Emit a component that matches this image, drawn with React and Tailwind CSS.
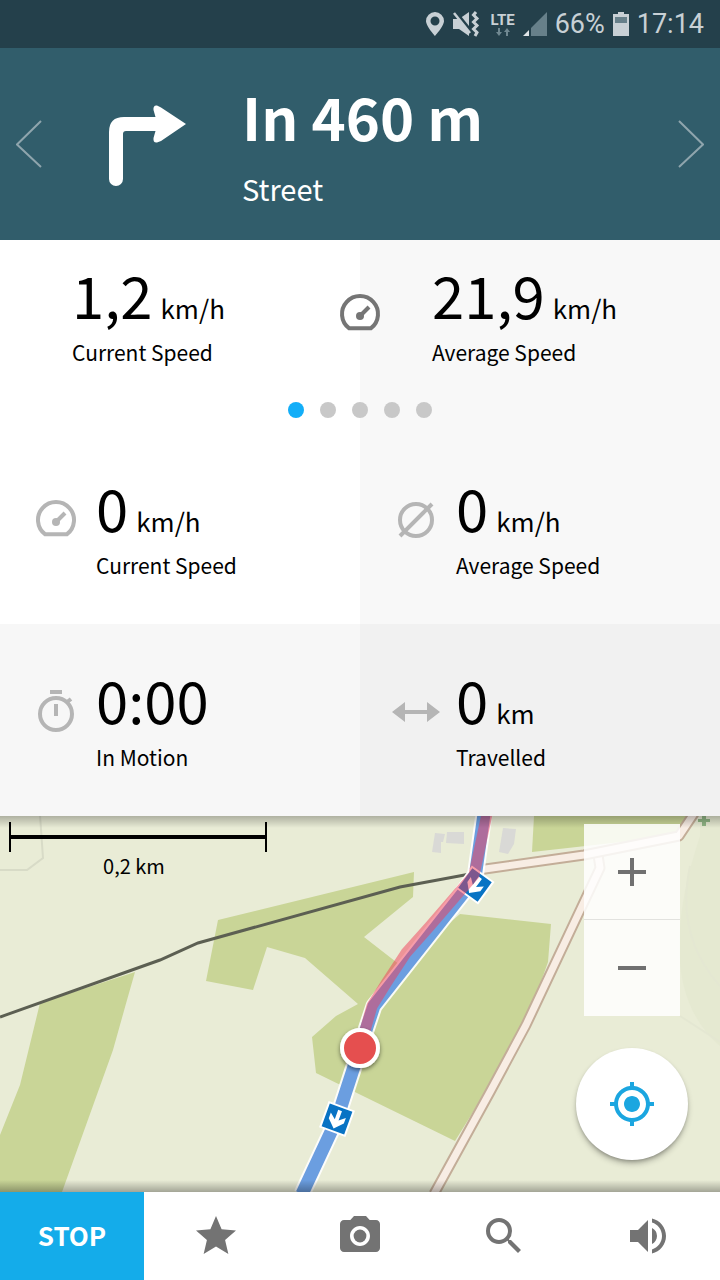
import React from 'react';
import {
  MdStar,
  MdPhotoCamera,
  MdSearch,
  MdVolumeUp,
  MdMyLocation
} from 'react-icons/md';

const GaugeIcon = ({ className, fill = 'none' }) => (
  <svg viewBox="0 0 48 48" className={className} fill="none">
    <path
      d="M13 38.200A18 18 0 1 1 35 38.200Z"
      fill={fill}
      stroke="currentColor"
      strokeWidth="4"
    />
    <path d="M24 26 33 17" stroke="currentColor" strokeWidth="4" />
    <circle cx="24" cy="26" r="4" fill="currentColor" />
  </svg>
);

const AverageIcon = ({ className }) => (
  <svg viewBox="0 0 48 48" className={className} fill="none" stroke="currentColor" strokeWidth="4">
    <circle cx="24" cy="24" r="16" />
    <path d="M8 40 40 8" />
  </svg>
);

const StopwatchIcon = ({ className }) => (
  <svg viewBox="0 0 48 48" className={className} fill="none" stroke="currentColor" strokeWidth="4">
    <circle cx="24" cy="26" r="16" />
    <path d="M18 4H30M24 16V28M34.500 14.500 39 11" />
  </svg>
);

const DistanceIcon = ({ className }) => (
  <svg viewBox="0 0 48 48" className={className} fill="currentColor">
    <path d="M0 24 13 14V22H35V14L48 24 35 34V26H13V34Z" />
  </svg>
);

const PinIcon = () => (
  <svg viewBox="0 0 18 24" className="h-6 w-4.5" fill="#c8d0d5" fillRule="evenodd">
    <path d="M9 0A9 9 0 0 1 18 9C18 14 9 24 9 24S0 14 0 9A9 9 0 0 1 9 0ZM9 4.500A4.500 4.500 0 1 0 9 13.500 4.500 4.500 0 0 0 9 4.500Z" />
  </svg>
);

const VibrateIcon = () => (
  <svg viewBox="0 0 28 28" className="h-7 w-7" fill="none">
    <path d="M1 9H7L17 2V26L7 19H1Z" fill="#c8d0d5" />
    <path d="M3 1 19 21" stroke="#24404b" strokeWidth="3" />
    <path d="M2 3 18 23" stroke="#c8d0d5" strokeWidth="2.500" />
    <path
      d="M24 2 21.500 5 25 8.500 21.500 12 25 15.500 21.500 19 25 22.500 23 26"
      stroke="#c8d0d5"
      strokeWidth="3"
    />
  </svg>
);

const stats = [
  { icon: GaugeIcon, value: '0', unit: 'km/h', label: 'Current Speed', bg: 'bg-white' },
  { icon: AverageIcon, value: '0', unit: 'km/h', label: 'Average Speed', bg: 'bg-[#f8f8f8]' },
  { icon: StopwatchIcon, value: '0:00', unit: '', label: 'In Motion', bg: 'bg-[#f7f7f7]' },
  { icon: DistanceIcon, value: '0', unit: 'km', label: 'Travelled', bg: 'bg-[#f1f1f1]' }
];

const actions = [
  { icon: MdStar, label: 'Favourites' },
  { icon: MdPhotoCamera, label: 'Camera' },
  { icon: MdSearch, label: 'Search' },
  { icon: MdVolumeUp, label: 'Sound' }
];

const Reading = ({ value, unit, label }) => (
  <div>
    <div className="flex items-baseline gap-2 text-[58px] leading-16">
      <span>{value}</span>
      {unit && <span className="text-[26px] leading-8">{unit}</span>}
    </div>
    <div className="mt-3 text-[21px] leading-7">{label}</div>
  </div>
);

const StatusBar = () => (
  <div className="flex h-12 items-center justify-end bg-[#24404b] pr-4 font-[Roboto,sans-serif] text-[27px] text-[#c8d0d5]">
    <PinIcon />
    <span className="ml-2">
      <VibrateIcon />
    </span>
    <div className="ml-2.5 flex flex-col items-center">
      <span className="text-[15px] leading-4 font-bold">LTE</span>
      <svg viewBox="0 0 14 8" className="h-2 w-3.5" fill="#708891">
        <path d="M2 0H4V4H6L3 8 0 4H2ZM10 8H12V4H14L11 0 8 4H10Z" />
      </svg>
    </div>
    <svg viewBox="0 0 24 24" className="ml-2 h-6 w-6">
      <path d="M8 24V16L24 0V24Z" fill="#67808a" />
      <path d="M0 24 6 18V24Z" fill="#dfe4e7" />
    </svg>
    <span className="ml-2">66%</span>
    <svg viewBox="0 0 16 24" className="ml-2 h-6 w-4">
      <path d="M5 0H11V2H16V24H0V2H5Z" fill="#c8d0d5" />
      <path d="M2 5H14V11H2Z" fill="#67808a" />
    </svg>
    <span className="ml-2">17:14</span>
  </div>
);

const TurnBanner = () => (
  <header className="flex h-48 items-center bg-[#315d6b] px-4 text-white">
    <button aria-label="Previous instruction">
      <svg viewBox="0 0 26 48" className="h-12 w-6.5" fill="none" stroke="#8fa5ad" strokeWidth="2">
        <path d="M25 1 1 24.500 25 47" />
      </svg>
    </button>
    <svg viewBox="0 0 80 84" className="ml-16 h-21 w-20" fill="#fff">
      <path d="M3 77V30Q3 15 18 15H49.500L47.500 8Q47 3 51 3.500L55 5.500 80 22 55 39 51 40.500Q47 41 47.500 36L49.500 29H20Q17 29 17 32V77A7 7 0 0 1 3 77Z" />
    </svg>
    <div className="ml-14 flex-1 pb-1">
      <h1 className="text-[58px] leading-20 font-bold">In 460 m</h1>
      <p className="mt-3 text-[29px] leading-10">Street</p>
    </div>
    <button aria-label="Next instruction">
      <svg viewBox="0 0 26 48" className="h-12 w-6.5" fill="none" stroke="#8fa5ad" strokeWidth="2">
        <path d="M1 1 25 24.500 1 47" />
      </svg>
    </button>
  </header>
);

const SpeedPager = () => (
  <section className="relative grid h-48 grid-cols-2">
    <div className="bg-white pt-[22px] pl-18">
      <Reading value="1,2" unit="km/h" label="Current Speed" />
    </div>
    <div className="bg-[#f8f8f8] pt-[22px] pl-18">
      <Reading value="21,9" unit="km/h" label="Average Speed" />
    </div>
    <div className="absolute inset-x-0 top-[50px] flex flex-col items-center text-[#757575]">
      <GaugeIcon className="h-12 w-12" fill="#fff" />
      <div className="mt-16 flex gap-4">
        {[0, 1, 2, 3, 4].map((page) => (
          <button
            key={page}
            aria-label={`Page ${page + 1}`}
            className={`h-4 w-4 rounded-full ${page === 0 ? 'bg-[#13aef8]' : 'bg-[#c8c8c8]'}`}
          />
        ))}
      </div>
    </div>
  </section>
);

const RouteSign = ({ x, y, angle }) => (
  <g transform={`translate(${x} ${y}) rotate(${angle})`}>
    <rect x="-13" y="-13" width="26" height="26" fill="#0873c4" stroke="#fff" strokeWidth="2" />
    <path d="M-2-9H2V1L8-4V2L0 10-8 2V-4L-2 1Z" fill="#fff" />
  </g>
);

const Road = ({ d }) => (
  <g fill="none" strokeLinejoin="round">
    <path d={d} stroke="#c3ad98" strokeWidth="11" />
    <path d={d} stroke="#f8ede4" strokeWidth="7" />
  </g>
);

const MapCanvas = () => (
  <svg
    viewBox="0 0 720 376"
    preserveAspectRatio="xMidYMid slice"
    className="absolute inset-0 h-full w-full"
  >
    <defs>
      <filter id="pin" x="-50%" y="-50%" width="200%" height="200%">
        <feDropShadow dx="0" dy="2" stdDeviation="2" floodOpacity="0.5" />
      </filter>
    </defs>
    <rect width="720" height="376" fill="#e9ecd6" />
    <path d="M700 0H720V230Q650 170 700 20Z" fill="#e5e9d1" />
    <path d="M690 50Q675 120 720 170M680 200 720 226" fill="none" stroke="#e4e7d2" strokeWidth="2" />
    <path d="M40 0 43 43 27 55H0" fill="none" stroke="#d8dbc7" strokeWidth="2" transform="translate(0 -1)" />

    {/* Fields and woods */}
    <g fill="#c9d597">
      <path d="M40 187 135 156 127 184 113 234 62 376H0V319L20 269Z" />
      <path d="M218 104 414 56 413 81 364 121 400 149 460 98 551 108 548 146 524 214 455 325 316 257 312 221 336 200 358 188 305 142 267 131 253 174 206 165Z" />
      <path d="M534 0H693L684 19 532 36Z" />
    </g>
    <path d="M702-1H706V3H710V6H706V10H702V6H698V3H702Z" fill="#8fb584" />

    {/* Buildings */}
    <g fill="#d9d9d6">
      <path d="M435 17 445 18 443 26H441V37L432 36Z" />
      <path d="M447 16H464V28L446 27Z" />
      <path d="M503 12 516 13 514 28 508 38 499 36Z" />
    </g>

    <Road d="M434 378 490 276 526 209 600 52 598 39" />
    <Road d="M478 54 584 39 679 20 695-4" />
    <path d="M0 201 160 144 198 127 400 71 470 58" fill="none" stroke="#5c5f52" strokeWidth="3" />

    {/* Planned route and recorded track */}
    <g fill="none" strokeLinejoin="round">
      <path d="M484-2 475 62 374 190 360 232 337 303 302 378" stroke="#fff" strokeOpacity="0.900" strokeWidth="17" />
      <path d="M484-2 475 62 374 190 360 232 337 303 302 378" stroke="#6b9ee0" strokeWidth="13" />
    </g>
    <RouteSign x={475} y={69} angle={36} />
    <RouteSign x={337} y={303} angle={20} />
    <path
      d="M487-2 474 59 430 110 406 137 387 166 372 190 360 232"
      fill="none"
      stroke="#f23b58"
      strokeOpacity="0.500"
      strokeWidth="11"
      strokeLinejoin="round"
    />
    <circle cx="360" cy="232" r="18" fill="#e5504f" stroke="#fff" strokeWidth="4" filter="url(#pin)" />
  </svg>
);

const MapView = () => (
  <main className="relative flex flex-1 justify-between overflow-hidden">
    <MapCanvas />
    <div className="absolute inset-x-0 top-0 h-3 bg-linear-to-b from-black/25 to-transparent" />
    <div className="absolute inset-x-0 bottom-0 h-3 bg-linear-to-t from-black/30 to-transparent" />
    <div className="relative pt-1.5 pl-[9px]">
      <div className="flex h-[30px] w-[258px] items-center border-x-2 border-black">
        <div className="h-1 w-full bg-black" />
      </div>
      <div className="pr-2 text-center text-xl leading-7">0,2 km</div>
    </div>
    <div className="relative mr-8 flex w-28 flex-col items-center gap-8 pt-2 pb-8">
      <div className="flex w-24 flex-col bg-white/85 text-[#707070]">
        <button aria-label="Zoom in" className="flex h-24 items-center justify-center border-b border-black/10">
          <svg viewBox="0 0 28 28" className="h-7 w-7" stroke="currentColor" strokeWidth="4">
            <path d="M0 14H28M14 0V28" />
          </svg>
        </button>
        <button aria-label="Zoom out" className="flex h-24 items-center justify-center">
          <svg viewBox="0 0 28 28" className="h-7 w-7" stroke="currentColor" strokeWidth="4">
            <path d="M0 14H28" />
          </svg>
        </button>
      </div>
      <button
        aria-label="My location"
        className="flex h-28 w-28 items-center justify-center rounded-full bg-white text-[#1ba6e0] shadow-md shadow-black/30"
      >
        <MdMyLocation className="h-12 w-12" />
      </button>
    </div>
  </main>
);

const App = () => {
  return (
    <div className="flex min-h-screen flex-col bg-white font-['Noto_Sans_CJK_SC','Noto_Sans',sans-serif] text-black">
      <StatusBar />
      <TurnBanner />
      <SpeedPager />
      <section className="grid grid-cols-2">
        {stats.map(({ icon: Icon, bg, ...reading }, i) => (
          <div key={i} className={`flex h-48 items-start gap-4 pt-[43px] pl-8 ${bg}`}>
            <Icon className="mt-[21px] h-12 w-12 text-[#b5b5b5]" />
            <Reading {...reading} />
          </div>
        ))}
      </section>
      <MapView />
      <nav className="grid h-22 grid-cols-5 bg-white">
        <button className="bg-[#14acea] pb-1 text-[26px] font-bold text-white">STOP</button>
        {actions.map(({ icon: Icon, label }) => (
          <button key={label} aria-label={label} className="flex items-center justify-center text-[#737373]">
            <Icon className="h-12 w-12" />
          </button>
        ))}
      </nav>
    </div>
  );
};

export default App;
